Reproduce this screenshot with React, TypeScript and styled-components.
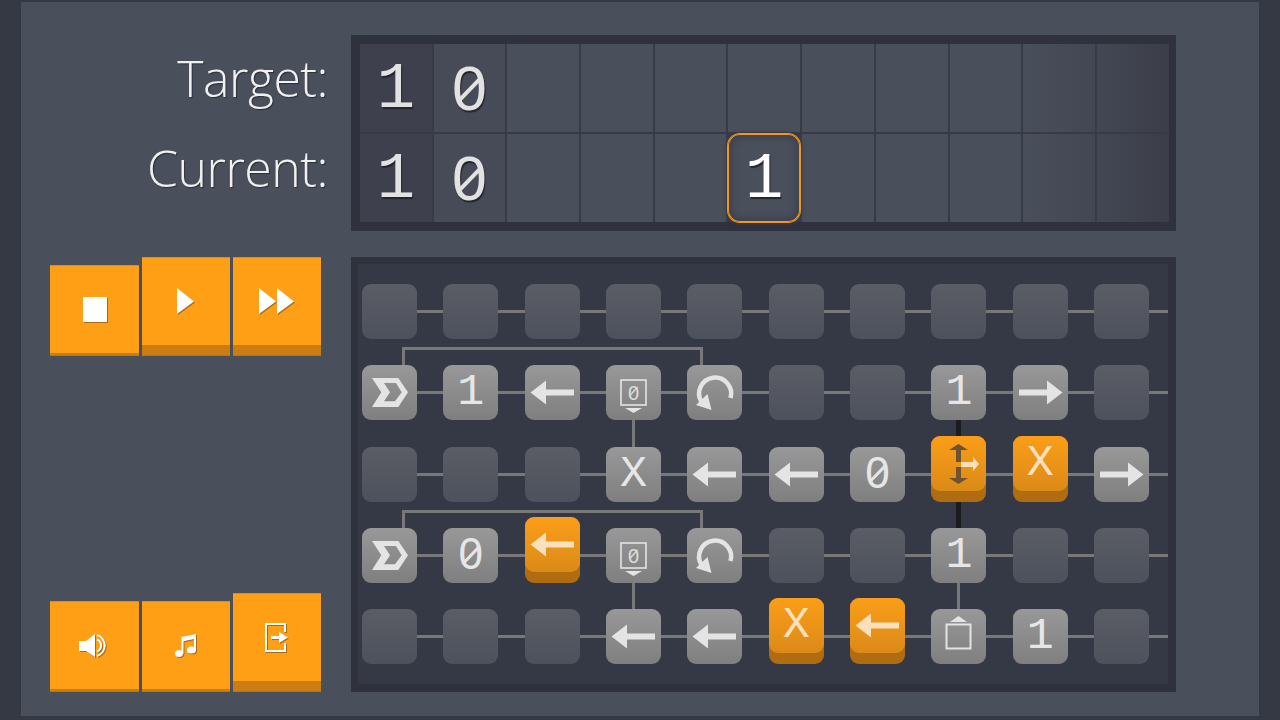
import React from "react";
import styled, { createGlobalStyle } from "styled-components";

const GlobalStyle = createGlobalStyle`
  html, body {
    margin: 0;
    padding: 0;
    width: 1280px;
    height: 720px;
    overflow: hidden;
    background: #353944;
  }
`;

const Panel = styled.div`
  box-sizing: border-box;
  width: 1238px;
  height: 714px;
  margin: 2px 21px 4px;
  padding-top: 33px;
  background: #4a4f5c;
  display: grid;
  grid-template-columns: 330px 825px;
  grid-template-rows: 196px 435px;
  row-gap: 26px;
`;

const Labels = styled.div`
  display: flex;
  flex-direction: column;
  padding: 4px 23px 0 0;
  align-items: flex-end;
`;

const Label = styled.div`
  height: 90px;
  line-height: 78px;
  font-family: "Open Sans", sans-serif;
  font-weight: 300;
  font-size: 50px;
  letter-spacing: -0.5px;
  color: #f0f0f0;
  text-shadow: 1px 1px 1px #2c2f38;
`;

const Display = styled.div`
  box-sizing: border-box;
  border: solid #2f323d;
  border-width: 9px 7px 9px 9px;
  background: #383b47;
  display: grid;
  grid-template-columns: repeat(11, 71.7px);
  grid-template-rows: 88px 88px;
  gap: 2px;
`;

// outer columns fade into the frame, the digits stay bright on top
const cellTone = (column: number) => {
  if (column === 0) return "#3e414d";
  if (column === 1) return "#474b58";
  if (column === 9) return "linear-gradient(90deg, #494e5b, #434753)";
  if (column === 10) return "linear-gradient(90deg, #434753, #3b3e49)";
  return "#4a4f5c";
};

const Cell = styled.div<{ $active?: boolean; $column: number }>`
  box-sizing: border-box;
  padding-top: 4px;
  background: ${(props) => cellTone(props.$column)};
  display: flex;
  align-items: center;
  justify-content: center;
  font-family: "Liberation Mono", monospace;
  font-size: 64px;
  line-height: 1;
  color: ${(props) => (props.$active ? "#ffffff" : "#e2e2e2")};
  text-shadow: 1px 2px 1px #23252c;
  ${(props) =>
    props.$active &&
    `
    position: relative;
    z-index: 1;
    border-radius: 12px;
    box-shadow: 0 0 0 1px #f29a1c, inset 0 0 0 1px #f29a1c, inset 0 0 8px 2px #383b47, 0 0 4px 1px #383b47;
  `}
`;

// the reference zero is a narrow oval crossed by a full slash
const Zero = styled.span`
  position: relative;
  display: inline-block;
  margin-top: -0.04em;
  font-family: "Liberation Sans", sans-serif;
  font-size: 0.98em;
  line-height: 1;
  &::after {
    content: "";
    position: absolute;
    left: 50%;
    top: 50%;
    width: 0.06em;
    height: 0.52em;
    background: currentColor;
    transform: translate(-50%, -50%) rotate(44deg);
  }
`;

const Digit = ({ value }: { value: string }) =>
  value === "0" ? <Zero>0</Zero> : <>{value}</>;

const Side = styled.div`
  padding: 0 0 0 29px;
  display: flex;
  flex-direction: column;
  justify-content: space-between;
`;

const ButtonRow = styled.div`
  display: flex;
  align-items: flex-end;
  gap: 3px;
`;

const Button = styled.div<{ $width: number; $depth: number }>`
  box-sizing: border-box;
  width: ${(props) => props.$width}px;
  padding-bottom: ${(props) => props.$depth}px;
  background: #c97d12;
  border-bottom: 1px solid #b3772a;
`;

const ButtonFace = styled.div`
  box-sizing: border-box;
  height: 88px;
  background: #ff9f16;
  border-top: 1px solid #d98c2e;
  display: flex;
  align-items: center;
  justify-content: center;
  svg {
    display: block;
    filter: drop-shadow(1px 1px 0 #a56a1c);
  }
`;

const Board = styled.div`
  box-sizing: border-box;
  border: solid #2f323d;
  border-width: 7px 8px 8px 7px;
  background: #353945;
  padding-top: 20px;
  display: flex;
  flex-direction: column;
  gap: 26.3px;
`;

const Row = styled.div`
  position: relative;
  display: flex;
  align-items: flex-start;
  gap: 26.35px;
  padding-left: 4px;
  height: 55px;
  &::before {
    content: "";
    position: absolute;
    left: 30px;
    right: 0;
    top: 26px;
    height: 3px;
    background: #787878;
  }
`;

const Bracket = styled.div`
  position: absolute;
  box-sizing: border-box;
  left: 44px;
  top: -18px;
  width: 301px;
  height: 24px;
  border: solid #787878;
  border-width: 3px 3px 0 3px;
`;

const Node = styled.div<{ $lifted?: boolean; $down?: "gray" | "black" }>`
  position: relative;
  flex: 0 0 55px;
  width: 55px;
  height: ${(props) => (props.$lifted ? 66 : 55)}px;
  margin-top: ${(props) => (props.$lifted ? -11 : 0)}px;
  border-radius: 9px;
  background: ${(props) => (props.$lifted ? "#b06c10" : "transparent")};
  ${(props) =>
    props.$down &&
    `
    &::after {
      content: "";
      position: absolute;
      top: 100%;
      left: ${props.$down === "black" ? 25 : 26}px;
      width: ${props.$down === "black" ? 5 : 3}px;
      height: 27px;
      background: ${props.$down === "black" ? "#1c1c1e" : "#787878"};
    }
  `}
`;

const Face = styled.div<{ $kind: "empty" | "gray" | "orange" }>`
  position: relative;
  box-sizing: border-box;
  height: 55px;
  border-radius: 9px;
  display: flex;
  align-items: center;
  justify-content: center;
  font-family: "Liberation Mono", monospace;
  font-size: 45px;
  line-height: 1;
  color: ${(props) => (props.$kind === "orange" ? "#fbe0bd" : "#e6e6e6")};
  background: ${(props) =>
    props.$kind === "orange"
      ? "linear-gradient(#fb9e18, #db8a18)"
      : props.$kind === "gray"
        ? "linear-gradient(#989898, #7f7f7f)"
        : "linear-gradient(#5a5d66, #4d515b)"};
  svg {
    display: block;
  }
`;

const LIGHT = "#e4e4e4";
const CREAM = "#fbe0bd";

const ArrowLeft = ({ color = LIGHT }: { color?: string }) => (
  <svg width="55" height="55" viewBox="0 0 55 55">
    <path d="M5.5 27.5L21 15.5V24.5H49V30.5H21V39.5Z" fill={color} />
  </svg>
);

const ArrowRight = () => (
  <svg width="55" height="55" viewBox="0 0 55 55">
    <path d="M49.5 27.5L34 15.5V24.5H6V30.5H34V39.5Z" fill={LIGHT} />
  </svg>
);

const StartIcon = () => (
  <svg width="55" height="55" viewBox="0 0 55 55">
    <path
      fillRule="evenodd"
      d="M10 13H36.3L46 27.3L36.3 42H10L19.3 27.3ZM22 18L28 27.3L22 36.3H33L39.7 27.3L34 18Z"
      fill={LIGHT}
    />
  </svg>
);

const ReadIcon = () => (
  <svg width="55" height="55" viewBox="0 0 55 55">
    <rect x="15" y="15" width="25" height="25" fill="none" stroke={LIGHT} strokeWidth="1.6" />
    <text
      x="27.5"
      y="34.5"
      textAnchor="middle"
      fontFamily="'Liberation Sans', sans-serif"
      fontSize="20"
      fill="#dcdcdc"
    >
      0
    </text>
    <path d="M23.5 31L31.5 22" stroke="#dcdcdc" strokeWidth="1.3" />
    <path d="M19 43H36L27.5 48Z" fill={LIGHT} />
  </svg>
);

const WriteIcon = () => (
  <svg width="55" height="55" viewBox="0 0 55 55">
    <rect x="15.5" y="15.5" width="24" height="24" fill="none" stroke={LIGHT} strokeWidth="2" />
    <path d="M19 13H36L27.5 7Z" fill={LIGHT} />
  </svg>
);

const RotateIcon = () => (
  <svg width="55" height="55" viewBox="0 0 55 55">
    <path
      d="M43.5 33A16 16 0 1 0 14.5 37"
      fill="none"
      stroke={LIGHT}
      strokeWidth="4.5"
    />
    <path d="M9 40L20.5 29L24.5 45Z" fill={LIGHT} />
  </svg>
);

const BranchIcon = () => (
  <svg width="55" height="55" viewBox="0 0 55 55">
    <path
      d="M27.5 8L37 14H30V26H25V14H18ZM27.5 48L37 42H30V31H25V42H18Z"
      fill="#6e5330"
    />
    <path d="M30 26H42V21L48 28L42 35V31H30Z" fill={CREAM} />
  </svg>
);

const StopIcon = () => (
  <svg width="24" height="25" viewBox="0 0 24 25">
    <rect width="24" height="25" fill="#fff" />
  </svg>
);

const PlayIcon = () => (
  <svg width="18" height="27" viewBox="0 0 18 27">
    <path d="M0 0L17 13.5L0 26Z" fill="#fff" />
  </svg>
);

const FastIcon = () => (
  <svg width="36" height="27" viewBox="0 0 36 27">
    <path d="M0 0L17 13.5L0 26ZM18 0L35 13.5L18 26Z" fill="#fff" />
  </svg>
);

const SoundIcon = () => (
  <svg width="32" height="24" viewBox="0 0 32 24">
    <path d="M0 7H7L16 0V23L7 17H0Z" fill="#fff" />
    <path
      d="M18 5.5A6.5 6.5 0 0 1 18 17.5M18 1A11 11 0 0 1 18 22"
      fill="none"
      stroke="#fff"
      strokeWidth="2"
    />
  </svg>
);

const MusicIcon = () => (
  <svg width="22" height="24" viewBox="0 0 22 24">
    <path d="M6.5 3L21 0V16H19V5L8.5 7.2V19.5H6.5Z" fill="#fff" />
    <ellipse cx="4" cy="19.5" rx="4" ry="3.5" fill="#fff" />
    <ellipse cx="16.5" cy="16" rx="4.5" ry="3.5" fill="#fff" />
  </svg>
);

const ExitIcon = () => (
  <svg width="24" height="29" viewBox="0 0 24 29">
    <path
      d="M20 9V1H1V28H20V20"
      fill="none"
      stroke="#fff"
      strokeWidth="2"
    />
    <path d="M6 13H14V9L23 14.5L14 20V16H6Z" fill="#fff" />
  </svg>
);

type Cellish = {
  content?: React.ReactNode;
  kind?: "empty" | "gray" | "orange";
  lifted?: boolean;
  down?: "gray" | "black";
};

const e: Cellish = { kind: "empty" };
const gray = (content: React.ReactNode, down?: "gray" | "black"): Cellish => ({
  content,
  kind: "gray",
  down,
});
const lit = (content: React.ReactNode, down?: "gray" | "black"): Cellish => ({
  content,
  kind: "orange",
  lifted: true,
  down,
});

const rows: { bracket?: boolean; nodes: Cellish[] }[] = [
  { nodes: [e, e, e, e, e, e, e, e, e, e] },
  {
    bracket: true,
    nodes: [
      gray(<StartIcon />),
      gray("1"),
      gray(<ArrowLeft />),
      gray(<ReadIcon />, "gray"),
      gray(<RotateIcon />),
      e,
      e,
      gray("1", "black"),
      gray(<ArrowRight />),
      e,
    ],
  },
  {
    nodes: [
      e,
      e,
      e,
      gray("X"),
      gray(<ArrowLeft />),
      gray(<ArrowLeft />),
      gray(<Digit value="0" />),
      lit(<BranchIcon />, "black"),
      lit("X"),
      gray(<ArrowRight />),
    ],
  },
  {
    bracket: true,
    nodes: [
      gray(<StartIcon />),
      gray(<Digit value="0" />),
      lit(<ArrowLeft color={CREAM} />),
      gray(<ReadIcon />, "gray"),
      gray(<RotateIcon />),
      e,
      e,
      gray("1", "gray"),
      e,
      e,
    ],
  },
  {
    nodes: [
      e,
      e,
      e,
      gray(<ArrowLeft />),
      gray(<ArrowLeft />),
      lit("X"),
      lit(<ArrowLeft color={CREAM} />),
      gray(<WriteIcon />),
      gray("1"),
      e,
    ],
  },
];

const target = ["1", "0", "", "", "", "", "", "", "", "", ""];
const current = ["1", "0", "", "", "", "1", "", "", "", "", ""];

const App = () => {
  return (
    <>
      <GlobalStyle />
      <Panel>
        <Labels>
          <Label>Target:</Label>
          <Label>Current:</Label>
        </Labels>
        <Display>
          {target.map((value, i) => (
            <Cell key={`t${i}`} $column={i}>
              <Digit value={value} />
            </Cell>
          ))}
          {current.map((value, i) => (
            <Cell key={`c${i}`} $column={i} $active={i === 5}>
              <Digit value={value} />
            </Cell>
          ))}
        </Display>
        <Side>
          <ButtonRow>
            <Button $width={89} $depth={2}>
              <ButtonFace>
                <StopIcon />
              </ButtonFace>
            </Button>
            <Button $width={88} $depth={10}>
              <ButtonFace>
                <PlayIcon />
              </ButtonFace>
            </Button>
            <Button $width={88} $depth={10}>
              <ButtonFace>
                <FastIcon />
              </ButtonFace>
            </Button>
          </ButtonRow>
          <ButtonRow>
            <Button $width={89} $depth={2}>
              <ButtonFace>
                <SoundIcon />
              </ButtonFace>
            </Button>
            <Button $width={88} $depth={2}>
              <ButtonFace>
                <MusicIcon />
              </ButtonFace>
            </Button>
            <Button $width={88} $depth={10}>
              <ButtonFace>
                <ExitIcon />
              </ButtonFace>
            </Button>
          </ButtonRow>
        </Side>
        <Board>
          {rows.map((row, r) => (
            <Row key={r}>
              {row.bracket && <Bracket />}
              {row.nodes.map((node, c) => (
                <Node key={c} $lifted={node.lifted} $down={node.down}>
                  <Face $kind={node.kind ?? "empty"}>{node.content}</Face>
                </Node>
              ))}
            </Row>
          ))}
        </Board>
      </Panel>
    </>
  );
};

export default App;
